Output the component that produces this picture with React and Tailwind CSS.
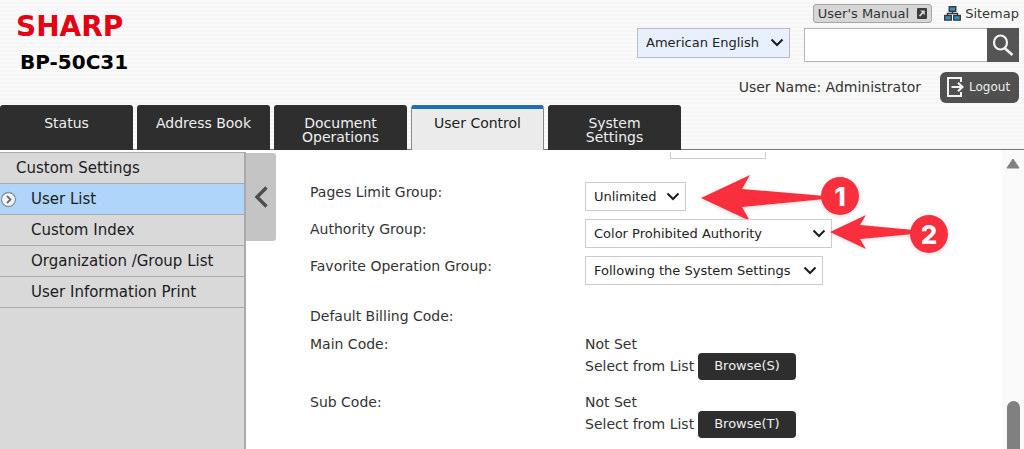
import { useState } from 'react';

const tabs = ['Status', 'Address Book', 'Document Operations', 'User Control', 'System Settings'];

const menuItems = ['User List', 'Custom Index', 'Organization /Group List', 'User Information Print'];

const Chevron = ({ className }) => (
  <svg className={className} width="14" height="9" viewBox="0 0 14 9" fill="none" aria-hidden="true">
    <path d="M1.5 1.5 L7 7 L12.5 1.5" stroke="#1c1c1c" strokeWidth="2" />
  </svg>
);

const SelectBox = ({ id, label, options, className, selectClassName = 'h-[29px] border-[#ccc] bg-white' }) => (
  <div className={`relative ${className}`}>
    <select
      id={id}
      aria-label={label}
      className={`w-full appearance-none border pl-2 text-[13px] text-[#222] ${selectClassName}`}
    >
      {options.map((option) => (
        <option key={option}>{option}</option>
      ))}
    </select>
    <Chevron className="pointer-events-none absolute right-[6px] top-[10px]" />
  </div>
);

const Header = () => (
  <header className="flex h-[105px] justify-between bg-[repeating-linear-gradient(#fafafa_0_2px,#f6f6f6_2px_4px)] pl-4 pr-[5px]">
    <div className="pt-3">
      <div className="text-[28px] leading-[30px] font-bold text-[#e60012]">SHARP</div>
      <h1 className="pl-1 pt-2 text-[20px] leading-6 font-bold text-black">BP-50C31</h1>
    </div>
    <div className="flex flex-col items-end pt-1">
      <div className="flex items-center gap-3">
        <button
          type="button"
          className="flex h-[19px] items-center gap-2 rounded-[3px] border border-[#a5a5a5] bg-[#d6d6d6] px-1 text-[13px]"
        >
          User's Manual
          <svg width="10" height="11" viewBox="0 0 10 11" aria-hidden="true">
            <rect width="10" height="11" rx="1" fill="#3c3c3c" />
            <path d="M3.2 2.4h4.6v4.8L6.2 5.6 3.2 8.8 1.9 7.5 4.9 4.2Z" fill="#d6d6d6" />
          </svg>
        </button>
        <a href="#sitemap" className="flex items-center gap-1 text-[13px]">
          <svg width="17" height="15" viewBox="0 0 17 15" aria-hidden="true">
            <path d="M8.5 5v3M3.5 10V7.5h10V10" fill="none" stroke="#333" strokeWidth="1.4" />
            <rect x="5.2" y="0.7" width="6.6" height="4.6" fill="#2f8fc8" stroke="#333" strokeWidth="1.3" />
            <rect x="0.7" y="9.5" width="6.6" height="4.6" fill="#2f8fc8" stroke="#333" strokeWidth="1.3" />
            <rect x="9.7" y="9.5" width="6.6" height="4.6" fill="#2f8fc8" stroke="#333" strokeWidth="1.3" />
          </svg>
          Sitemap
        </a>
      </div>
      <div className="mt-1 flex items-start gap-[14px]">
        <SelectBox
          label="Language"
          options={['American English']}
          className="w-[153px]"
          selectClassName="h-[30px] border-[#b8bcc4] bg-[#e8f0fe]"
        />
        <form className="flex" onSubmit={(e) => e.preventDefault()}>
          <input
            type="text"
            aria-label="Search"
            className="h-[34px] w-[183px] border border-r-0 border-[#b4b4b4] bg-white px-2 text-[13px]"
          />
          <button type="submit" aria-label="Search" className="flex h-[34px] w-8 items-center justify-center bg-[#555]">
            <svg width="22" height="22" viewBox="0 0 22 22" fill="none" stroke="#f2f2f2" aria-hidden="true">
              <ellipse cx="8.5" cy="8.5" rx="6.5" ry="7" strokeWidth="2.2" />
              <path d="M12.5 14 20.5 21" strokeWidth="2.6" />
            </svg>
          </button>
        </form>
      </div>
      <div className="mt-[10px] flex items-center gap-[19px]">
        <span className="text-[14px]">User Name: Administrator</span>
        <button
          type="button"
          className="flex h-[31px] w-[79px] items-center gap-[5px] rounded-md bg-[#505050] pl-[7px] text-[12px] text-[#eee]"
        >
          <svg width="17" height="20" viewBox="0 0 17 20" fill="none" stroke="#f2f2f2" strokeWidth="2" aria-hidden="true">
            <path d="M14 5V1H1v18h13v-4" />
            <path d="M4.5 10H15M11 5.8l4.4 4.2L11 14.2" strokeWidth="2.2" />
          </svg>
          Logout
        </button>
      </div>
    </div>
  </header>
);

const TabBar = () => {
  const [current, setCurrent] = useState('User Control');

  return (
    <nav className="flex gap-1 border-b border-[#777] bg-[repeating-linear-gradient(#fafafa_0_2px,#f6f6f6_2px_4px)]">
      {tabs.map((tab) => (
        <button
          key={tab}
          type="button"
          onClick={() => setCurrent(tab)}
          className={`-mb-px flex h-[45px] w-[133px] justify-center rounded-t-[3px] px-5 text-[14px] leading-[14px] ${
            tab === current
              ? 'border-x border-t-4 border-x-[#888] border-t-[#1f6db5] bg-[#ebebeb] pt-[7px] text-[#222]'
              : 'bg-[#2e2e2e] pt-[11px] text-[#f0f0f0]'
          } ${tab.length > 12 ? '' : 'whitespace-nowrap'}`}
        >
          {tab}
        </button>
      ))}
    </nav>
  );
};

const Sidebar = () => (
  <aside className="flex items-start pt-[2px]">
    <div className="w-[246px] self-stretch border-r-2 border-t border-[#aaa] bg-[#d9d9d9] text-[15px] text-[#1c1c1c]">
      <div className="flex h-[31px] items-center border-b border-[#aaa] pl-4">Custom Settings</div>
      <ul>
        {menuItems.map((item, index) => (
          <li key={item} className={`border-b border-[#aaa] ${index === 0 ? 'bg-[#afd5fa]' : ''}`}>
            <a href="#menu" className="flex h-[30px] items-center">
              <span className="w-[31px]">
                {index === 0 && (
                  <svg width="17" height="17" viewBox="0 0 17 17" fill="none" aria-hidden="true">
                    <circle cx="8.5" cy="8.5" r="7" fill="#f4f8fc" stroke="#8a96a5" strokeWidth="1.4" />
                    <path d="m7 5 3.5 3.5L7 12" stroke="#5f6f82" strokeWidth="1.8" />
                  </svg>
                )}
              </span>
              {item}
            </a>
          </li>
        ))}
      </ul>
    </div>
    <button
      type="button"
      aria-label="Collapse menu"
      className="mt-px flex h-[88px] w-[30px] items-center justify-center rounded-r-[3px] bg-[#c4c4c4]"
    >
      <svg width="14" height="22" viewBox="0 0 14 22" fill="none" aria-hidden="true">
        <path d="M12.5 1.5 3 11l9.5 9.5" stroke="#4d4d4d" strokeWidth="3.4" />
      </svg>
    </button>
  </aside>
);

const Field = ({ id, label, options, className, children }) => (
  <div className="mb-2 flex items-start">
    <label htmlFor={id} className="w-[275px] leading-5">
      {label}
    </label>
    <div className="relative">
      <SelectBox id={id} options={options} className={className} />
      {children}
    </div>
  </div>
);

const CodeRow = ({ label, button }) => (
  <div className="flex h-[58px] items-start">
    <div className="w-[275px] leading-[22px]">{label}</div>
    <div className="leading-[22px]">
      <div>Not Set</div>
      <div className="flex items-center gap-1">
        Select from List
        <button type="button" className="-my-1 h-[27px] rounded bg-[#2e2e2e] px-4 text-[13px] text-[#eee]">
          {button}
        </button>
      </div>
    </div>
  </div>
);

const Marker = ({ number, arrow, className }) => (
  <div className={`pointer-events-none absolute flex items-center drop-shadow-sm ${className}`}>
    {arrow}
    <span className="flex size-[38px] items-center justify-center rounded-full bg-[#fa2f3d] font-[Inter,sans-serif] text-[26px] font-extrabold text-white">
      {number}
    </span>
  </div>
);

const App = () => (
  <div className="flex min-h-screen flex-col overflow-hidden bg-white font-['DejaVu_Sans',sans-serif] text-[#333]">
    <Header />
    <TabBar />
    <div className="flex flex-1">
      <Sidebar />
      <main className="flex-1 pl-[34px] pt-[2px] text-[14px]">
        <div className="ml-[360px] h-[7px] w-24 border border-t-0 border-[#ccc]" />
        <div className="mt-[23px]">
          <Field id="pages" label="Pages Limit Group:" options={['Unlimited']} className="w-[101px]">
            <Marker
              number="1"
              className="left-[116px] top-[-11px]"
              arrow={
                <svg className="-mr-1" width="124" height="50" viewBox="0 0 124 50" aria-hidden="true">
                  <path d="M0 27 49 4 41 18 124 25v3L41 36l8 14Z" fill="#fa2f3d" />
                </svg>
              }
            />
          </Field>
          <Field id="authority" label="Authority Group:" options={['Color Prohibited Authority']} className="w-[247px]">
            <Marker
              number="2"
              className="left-[245px] top-[-4px]"
              arrow={
                <svg className="-mr-1" width="84" height="38" viewBox="0 0 84 38" aria-hidden="true">
                  <path d="M0 17 36 0 30 10 84 15v4L30 24l6 10Z" fill="#fa2f3d" />
                </svg>
              }
            />
          </Field>
          <Field
            id="favorite"
            label="Favorite Operation Group:"
            options={['Following the System Settings']}
            className="w-[238px]"
          />
        </div>
        <div className="mt-5 leading-[22px]">Default Billing Code:</div>
        <div className="mt-[6px]">
          <CodeRow label="Main Code:" button="Browse(S)" />
          <CodeRow label="Sub Code:" button="Browse(T)" />
        </div>
      </main>
      <div className="flex w-[22px] flex-col items-center justify-between bg-[#fafafa] pt-2">
        <svg width="14" height="11" viewBox="0 0 14 11" aria-hidden="true">
          <path d="M7 1 13 10H1Z" fill="#808080" stroke="#808080" strokeLinejoin="round" />
        </svg>
        <div className="h-12 w-[13px] rounded-t-full bg-[#808080]" />
      </div>
    </div>
  </div>
);

export default App;
